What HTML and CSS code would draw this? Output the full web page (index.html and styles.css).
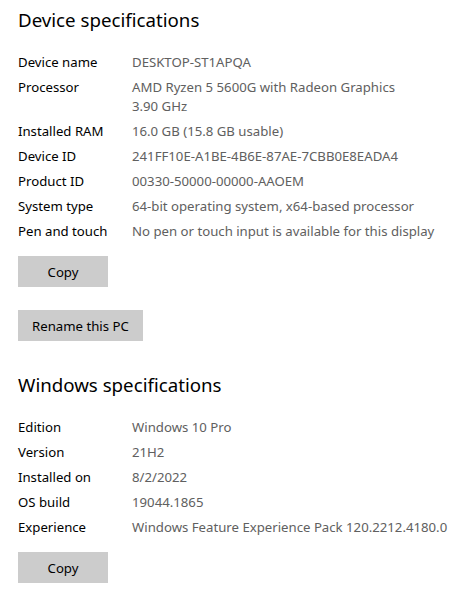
FILE: index.html
```html
<!DOCTYPE html>
<html>
<head>
<meta charset="utf-8">
<link rel="stylesheet" href="styles.css">
</head>
<body>
<section class="section">
  <h2 class="heading">Device specifications</h2>
  <div class="specs">
    <div class="row"><div class="label">Device name</div><div class="value">DESKTOP-ST1APQA</div></div>
    <div class="row"><div class="label">Processor</div><div class="value">AMD Ryzen 5 5600G with Radeon Graphics<br>3.90 GHz</div></div>
    <div class="row"><div class="label">Installed RAM</div><div class="value">16.0 GB (15.8 GB usable)</div></div>
    <div class="row"><div class="label">Device ID</div><div class="value">241FF10E-A1BE-4B6E-87AE-7CBB0E8EADA4</div></div>
    <div class="row"><div class="label">Product ID</div><div class="value">00330-50000-00000-AAOEM</div></div>
    <div class="row"><div class="label">System type</div><div class="value">64-bit operating system, x64-based processor</div></div>
    <div class="row"><div class="label">Pen and touch</div><div class="value">No pen or touch input is available for this display</div></div>
  </div>
  <div class="actions">
    <button class="btn">Copy</button>
    <button class="btn">Rename this PC</button>
  </div>
</section>
<section class="section section-second">
  <h2 class="heading">Windows specifications</h2>
  <div class="specs">
    <div class="row"><div class="label">Edition</div><div class="value">Windows 10 Pro</div></div>
    <div class="row"><div class="label">Version</div><div class="value">21H2</div></div>
    <div class="row"><div class="label">Installed on</div><div class="value">8/2/2022</div></div>
    <div class="row"><div class="label">OS build</div><div class="value">19044.1865</div></div>
    <div class="row"><div class="label">Experience</div><div class="value">Windows Feature Experience Pack 120.2212.4180.0</div></div>
  </div>
  <div class="actions">
    <button class="btn">Copy</button>
  </div>
</section>
</body>
</html>
```
FILE: styles.css
```css
html, body {
  margin: 0;
  padding: 0;
  background: #ffffff;
}
body {
  padding: 6px 18px 0 18px;
  font-family: "Noto Sans", "Open Sans", sans-serif;
  font-size: 13.2px;
  color: #000;
}
.section {
  display: flex;
  flex-direction: column;
  align-items: flex-start;
}
.section-second {
  margin-top: 30px;
}
.heading {
  margin: 0;
  font-size: 18.7px;
  font-weight: 400;
  line-height: 28px;
  color: #000;
}
.specs {
  margin-top: 16px;
  display: flex;
  flex-direction: column;
}
.row {
  display: grid;
  grid-template-columns: 114px auto;
  padding: 3px 0;
  line-height: 19px;
  white-space: nowrap;
}
.label {
  color: #000;
}
.value {
  color: #606060;
}
.actions {
  margin-top: 12px;
  display: flex;
  flex-direction: column;
  align-items: flex-start;
  gap: 23px;
}
.btn {
  font-family: inherit;
  font-size: 13.2px;
  color: #000;
  background: #cccccc;
  border: none;
  height: 31px;
  min-width: 90px;
  padding: 0 14px;
  margin: 0;
}
```
